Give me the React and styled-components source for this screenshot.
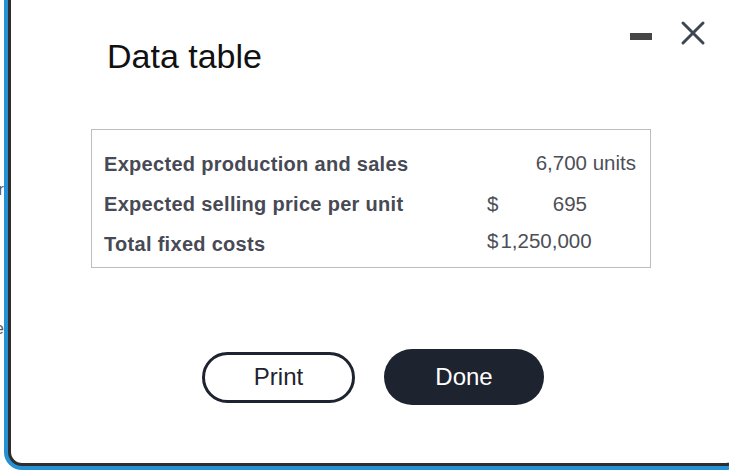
import React from "react";
import styled, { createGlobalStyle } from "styled-components";

const GlobalStyle = createGlobalStyle`
  html, body {
    margin: 0;
    padding: 0;
    background: #ffffff;
    overflow: hidden;
  }
  body {
    font-family: "Liberation Sans", Arial, sans-serif;
  }
`;

const Page = styled.div`
  display: flex;
  align-items: flex-start;
  width: 729px;
  height: 473px;
  overflow: hidden;
  background: #ffffff;
`;

const BehindStrip = styled.div`
  flex-shrink: 0;
  width: 4px;
  height: 473px;
  overflow: hidden;
  display: flex;
  flex-direction: column;
  color: #5a5a5a;
  font-size: 17px;
  line-height: 20px;
`;

const BehindLine = styled.div`
  display: flex;
  justify-content: flex-end;
  white-space: nowrap;
  margin-top: ${(p) => p.$top}px;
`;

const Modal = styled.div`
  flex-shrink: 0;
  box-sizing: border-box;
  width: 732px;
  height: 486px;
  margin-top: -20px;
  margin-left: 4px;
  padding-top: 37px;
  background: #ffffff;
  border: 3px solid #2e2e30;
  border-radius: 14px;
  box-shadow: 0 0 0 4px #2391d4;
  display: flex;
  flex-direction: column;
`;

const Header = styled.div`
  display: flex;
  align-items: flex-start;
  justify-content: space-between;
  padding: 0 31px 0 96px;
`;

const Title = styled.h2`
  margin: 16px 0 0;
  font-weight: 400;
  font-size: 34px;
  line-height: 40px;
  color: #111111;
`;

const Controls = styled.div`
  display: flex;
  align-items: flex-start;
  gap: 28px;
`;

const MinimizeBar = styled.div`
  width: 22px;
  height: 7px;
  margin-top: 13px;
  background: #464646;
`;

const CloseIcon = styled.svg`
  display: block;
  width: 26px;
  height: 26px;
`;

const Body = styled.div`
  padding: 0 86px 0 80px;
`;

const TableBox = styled.div`
  margin-top: 53px;
  box-sizing: border-box;
  width: 560px;
  border: 1px solid #bdbdbd;
  padding: 14px 0 3px 12px;
  display: grid;
  grid-template-columns: 383px 16px 84px 55px;
  grid-auto-rows: 40px;
`;

const Label = styled.div`
  display: flex;
  align-items: center;
  font-weight: 700;
  font-size: 20px;
  letter-spacing: 0.3px;
  color: #474a55;
  white-space: nowrap;
`;

const Cell = styled.div`
  display: flex;
  align-items: center;
  justify-content: ${(p) => (p.$right ? "flex-end" : "flex-start")};
  padding-bottom: ${(p) => p.$lift || 0}px;
  grid-column: ${(p) => p.$span || "auto"};
  font-size: 20.5px;
  color: #4d4f57;
  white-space: nowrap;
`;

const Dollar = styled.span`
  margin-right: 2px;
`;

const ButtonRow = styled.div`
  display: flex;
  justify-content: center;
  align-items: center;
  gap: 29px;
  margin-top: 81px;
  padding-left: 4px;
`;

const PrintButton = styled.button`
  box-sizing: border-box;
  width: 153px;
  height: 51px;
  border: 3px solid #1e2330;
  border-radius: 26px;
  background: #ffffff;
  color: #1e2330;
  font-family: "Liberation Sans", Arial, sans-serif;
  font-size: 24px;
  cursor: pointer;
`;

const DoneButton = styled.button`
  box-sizing: border-box;
  width: 160px;
  height: 56px;
  border: none;
  border-radius: 28px;
  background: #1e2330;
  color: #ffffff;
  font-family: "Liberation Sans", Arial, sans-serif;
  font-size: 24px;
  cursor: pointer;
`;

const App = () => {
  return (
    <>
      <GlobalStyle />
      <Page>
        <BehindStrip>
          <BehindLine $top={180}>per</BehindLine>
          <BehindLine $top={119}>the</BehindLine>
        </BehindStrip>

        <Modal>
          <Header>
            <Title>Data table</Title>
            <Controls>
              <MinimizeBar />
              <CloseIcon viewBox="0 0 26 26">
                <path
                  d="M3 3 L23 23 M23 3 L3 23"
                  stroke="#3d4753"
                  strokeWidth="3"
                  strokeLinecap="round"
                />
              </CloseIcon>
            </Controls>
          </Header>

          <Body>
            <TableBox>
              <Label>Expected production and sales</Label>
              <Cell />
              <Cell $right $lift={3}>6,700</Cell>
              <Cell $lift={3}>&nbsp;units</Cell>

              <Label>Expected selling price per unit</Label>
              <Cell $lift={1}>$</Cell>
              <Cell $right $lift={1}>695</Cell>
              <Cell />

              <Label>Total fixed costs</Label>
              <Cell $span="span 2" $lift={6}>
                <Dollar>$</Dollar>1,250,000
              </Cell>
              <Cell />
            </TableBox>

            <ButtonRow>
              <PrintButton>Print</PrintButton>
              <DoneButton>Done</DoneButton>
            </ButtonRow>
          </Body>
        </Modal>
      </Page>
    </>
  );
};

export default App;
